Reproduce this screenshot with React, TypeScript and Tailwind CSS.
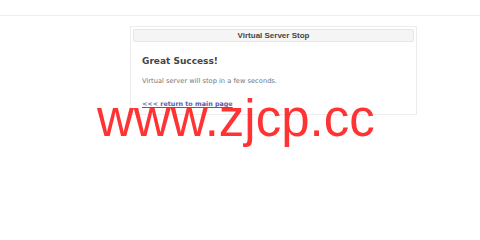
export default function App() {
  return (
    <div className="relative h-[239px] w-[480px] overflow-hidden bg-white" style={{ fontFamily: '"DejaVu Sans", Verdana, sans-serif' }}>
      {/* top bar */}
      <div className="h-[16px] border-b border-[#eeeeee]" />

      {/* panel */}
      <div className="ml-[130px] mt-[10px] h-[89px] w-[287px] border border-[#ececec] p-[2px]">
        <div
          className="flex h-[13px] items-center justify-center rounded-[2px] border border-[#e6e6e6] bg-[#f5f5f5] text-[8px] font-bold text-[#444]"
          style={{ fontFamily: '"Liberation Sans", Arial, sans-serif' }}
        >
          Virtual Server Stop
        </div>
        <div className="px-[9px]">
          <h1 className="mt-[12px] text-[9px] font-bold leading-[14px] text-[#444]">Great Success!</h1>
          <p className="mt-[8px] text-[6.7px] leading-[10px] text-[#777]">Virtual server will stop in a few seconds.</p>
          <a href="#" className="mt-[13px] block text-[6.4px] font-bold leading-[10px] text-[#5a5aa8] underline">
            &lt;&lt;&lt; return to main page
          </a>
        </div>
      </div>

      {/* watermark */}
      <div
        className="pointer-events-none absolute left-[97px] top-[89px] text-[51px] leading-[60px] text-[#ff3333]"
        style={{ fontFamily: '"Liberation Sans", Arial, sans-serif' }}
      >
        www.zjcp.cc
      </div>
    </div>
  );
}
